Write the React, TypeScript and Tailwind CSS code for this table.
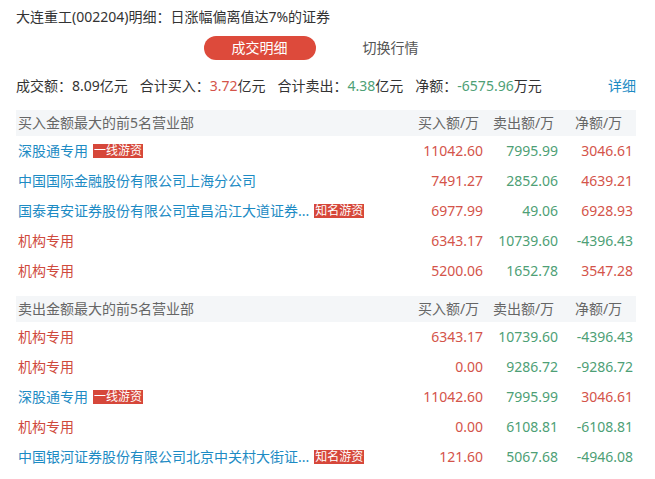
import React from 'react';

type Row = {
  name: string;
  kind: 'link' | 'org';
  badge?: string;
  buy: string;
  sell: string;
  net: string;
};

const buyRows: Row[] = [
  { name: '深股通专用', kind: 'link', badge: '一线游资', buy: '11042.60', sell: '7995.99', net: '3046.61' },
  { name: '中国国际金融股份有限公司上海分公司', kind: 'link', buy: '7491.27', sell: '2852.06', net: '4639.21' },
  { name: '国泰君安证券股份有限公司宜昌沿江大道证券...', kind: 'link', badge: '知名游资', buy: '6977.99', sell: '49.06', net: '6928.93' },
  { name: '机构专用', kind: 'org', buy: '6343.17', sell: '10739.60', net: '-4396.43' },
  { name: '机构专用', kind: 'org', buy: '5200.06', sell: '1652.78', net: '3547.28' },
];

const sellRows: Row[] = [
  { name: '机构专用', kind: 'org', buy: '6343.17', sell: '10739.60', net: '-4396.43' },
  { name: '机构专用', kind: 'org', buy: '0.00', sell: '9286.72', net: '-9286.72' },
  { name: '深股通专用', kind: 'link', badge: '一线游资', buy: '11042.60', sell: '7995.99', net: '3046.61' },
  { name: '机构专用', kind: 'org', buy: '0.00', sell: '6108.81', net: '-6108.81' },
  { name: '中国银河证券股份有限公司北京中关村大街证...', kind: 'link', badge: '知名游资', buy: '121.60', sell: '5067.68', net: '-4946.08' },
];

function Section({ title, rows }: { title: string; rows: Row[] }) {
  return (
    <div>
      <div className="grid grid-cols-[1fr_75px_75px_75px] h-[26px] items-center bg-[#f4f6f8] text-[#666]">
        <div className="pl-[2px]">{title}</div>
        <div className="text-center">买入额/万</div>
        <div className="text-center">卖出额/万</div>
        <div className="text-center">净额/万</div>
      </div>
      {rows.map((r, i) => (
        <div key={i} className="grid grid-cols-[1fr_75px_75px_75px] h-[30px] items-center">
          <div className="pl-[2px] flex items-center whitespace-nowrap">
            <span className={r.kind === 'link' ? 'text-[#1d8bc4]' : 'text-[#cf4a3d]'}>{r.name}</span>
            {r.badge && (
              <span className="ml-[5px] bg-[#d6473a] text-white text-[12px] leading-[14px] px-px">{r.badge}</span>
            )}
          </div>
          <div className="text-right pr-[3px] text-[#d4544a]">{r.buy}</div>
          <div className="text-right pr-[3px] text-[#4e9f76]">{r.sell}</div>
          <div className={'text-right pr-[3px] ' + (r.net.startsWith('-') ? 'text-[#4e9f76]' : 'text-[#d4544a]')}>
            {r.net}
          </div>
        </div>
      ))}
    </div>
  );
}

export default function App() {
  return (
    <div
      className="w-[655px] h-[479px] bg-white text-[14px] leading-[20px] text-[#333] pl-4 pr-[19px] pt-[7px]"
      style={{ fontFamily: '"Noto Sans", "Noto Sans CJK SC", sans-serif' }}
    >
      <div>大连重工(002204)明细：日涨幅偏离值达7%的证券</div>

      <div className="flex justify-center gap-[19px] mt-[9px] pr-[2px]">
        <div className="w-[112px] h-[24px] rounded-full bg-[#dd4a3b] text-white flex items-center justify-center">
          成交明细
        </div>
        <div className="w-[112px] h-[24px] text-[#555] flex items-center justify-center">切换行情</div>
      </div>

      <div className="flex items-center mt-[16px]">
        <span className="mr-3">
          成交额：8.09亿元
        </span>
        <span className="mr-3">
          合计买入：<span className="text-[#d4544a]">3.72</span>亿元
        </span>
        <span className="mr-3">
          合计卖出：<span className="text-[#4e9f76]">4.38</span>亿元
        </span>
        <span>
          净额：<span className="text-[#4e9f76]">-6575.96</span>万元
        </span>
        <span className="ml-auto text-[#1d8bc4]">详细</span>
      </div>

      <div className="mt-[14px]">
        <Section title="买入金额最大的前5名营业部" rows={buyRows} />
        <div className="mt-[10px]">
          <Section title="卖出金额最大的前5名营业部" rows={sellRows} />
        </div>
      </div>
    </div>
  );
}
